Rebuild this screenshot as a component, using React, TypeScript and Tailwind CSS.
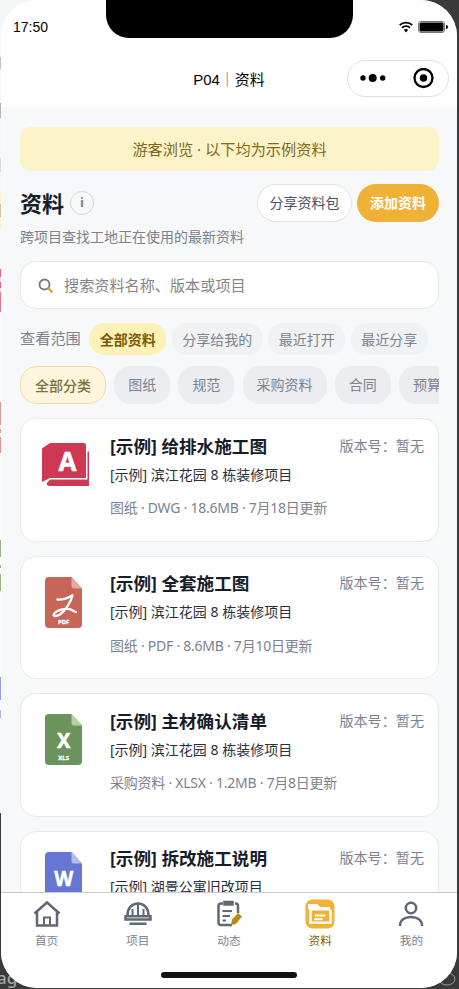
import React, { useState } from 'react';
import clsx from 'clsx';

type FileKind = 'dwg' | 'pdf' | 'xls' | 'doc';

interface Material {
  kind: FileKind;
  title: string;
  project: string;
  meta: string;
}

const materials: Material[] = [
  { kind: 'dwg', title: '[示例] 给排水施工图', project: '[示例] 滨江花园 8 栋装修项目', meta: '图纸 · DWG · 18.6MB · 7月18日更新' },
  { kind: 'pdf', title: '[示例] 全套施工图', project: '[示例] 滨江花园 8 栋装修项目', meta: '图纸 · PDF · 8.6MB · 7月10日更新' },
  { kind: 'xls', title: '[示例] 主材确认清单', project: '[示例] 滨江花园 8 栋装修项目', meta: '采购资料 · XLSX · 1.2MB · 7月8日更新' },
  { kind: 'doc', title: '[示例] 拆改施工说明', project: '[示例] 湖景公寓旧改项目', meta: '' },
];

const scopes = ['全部资料', '分享给我的', '最近打开', '最近分享'];
const categories = ['全部分类', '图纸', '规范', '采购资料', '合同', '预算'];

// colours of the page behind the phone, seen along its left edge
const edge = [
  ['h-[57px]', 'bg-[#f5f6f8]'],
  ['h-[12px]', 'bg-[#bfc0ca]'],
  ['h-[34px]', 'bg-[#f5f6f8]'],
  ['h-[15px]', 'bg-[#b4b4b8]'],
  ['h-[40px]', 'bg-[#f5f6f8]'],
  ['h-[14px]', 'bg-[#d9dade]'],
  ['h-[20px]', 'bg-[#f5f6f8]'],
  ['h-[12px]', 'bg-[#fbf1cf]'],
  ['h-[13px]', 'bg-[#cfc5a4]'],
  ['h-[12px]', 'bg-[#fbf1cf]'],
  ['h-[40px]', 'bg-[#f8f9fb]'],
  ['h-[8px]', 'bg-[#e0647a]'],
  ['h-[5px]', 'bg-[#f8e4e8]'],
  ['h-[6px]', 'bg-[#e0647a]'],
  ['h-[4px]', 'bg-[#f8e4e8]'],
  ['h-[20px]', 'bg-[#e0758a]'],
  ['h-[90px]', 'bg-[#fcfcfd]'],
  ['h-[23px]', 'bg-[#e0968e]'],
  ['h-[4px]', 'bg-white'],
  ['h-[4px]', 'bg-[#e0968e]'],
  ['h-[4px]', 'bg-white'],
  ['h-[16px]', 'bg-[#e0968e]'],
  ['h-[87px]', 'bg-[#fcfcfd]'],
  ['h-[17px]', 'bg-[#94b585]'],
  ['h-[8px]', 'bg-white'],
  ['h-[3px]', 'bg-[#94b585]'],
  ['h-[6px]', 'bg-white'],
  ['h-[17px]', 'bg-[#94b585]'],
  ['h-[86px]', 'bg-[#fcfcfd]'],
  ['h-[23px]', 'bg-[#919ee0]'],
  ['h-[10px]', 'bg-white'],
  ['h-[8px]', 'bg-[#a9b2e8]'],
  ['h-[95px]', 'bg-[#f8f9fb]'],
];

const FileIcon = ({ kind }: { kind: FileKind }) => {
  if (kind === 'dwg') {
    return (
      <svg width="48" height="44" viewBox="0 0 48 44">
        <path d="M8 0H41.5Q44 0 44 2.500V35H8L0 39V5.500Z" fill="#cd3852" />
        <path d="M45.500 8.500H47V43H7Q4.500 42 4.500 40.500L8 36.500H45.500Z" fill="#cd3852" />
        <text
          x="25.500" y="27.500" textAnchor="middle" fontSize="27" fontWeight="700" textLength="18" lengthAdjust="spacingAndGlyphs"
          fill="#fff" stroke="#fff" strokeWidth="0.500" className="font-['Noto_Sans']"
        >
          A
        </text>
      </svg>
    );
  }
  const body = { pdf: '#c76558', xls: '#6b945c', doc: '#6577d2' }[kind];
  const fold = { pdf: '#e5aaa2', xls: '#b4cfa7', doc: '#b2bdf0' }[kind];
  return (
    <svg width="37" height="51" viewBox="0 0 37 51">
      <path d="M4 0H26.500L37 11.500V47Q37 51 33 51H4Q0 51 0 47V4Q0 0 4 0Z" fill={body} />
      <path d="M26.500 0L37 11.500H29Q26.500 11.500 26.500 9Z" fill={fold} />
      {kind === 'pdf' ? (
        <>
          <path
            d="M12.500 22.500C18 23 23 21 27.500 18.200C26 25 20 34 15 37.500C11 40 7.500 39.500 9 37C11 33.500 19 31 24.500 32.200C28 33 29 34.800 31 35.200"
            fill="none" stroke="#fff" strokeWidth="2.300" strokeLinecap="round" strokeLinejoin="round"
          />
          <text x="18.700" y="46.500" textAnchor="middle" fontSize="6" fontWeight="700" fill="#fff" stroke="#fff" strokeWidth="0.300" className="font-['Noto_Sans']">PDF</text>
        </>
      ) : (
        <>
          <text
            x="18.700" y="34.300" textAnchor="middle" fontSize={kind === 'xls' ? 22 : 21} fontWeight="700"
            textLength={kind === 'xls' ? 13.5 : 19} lengthAdjust="spacingAndGlyphs"
            fill="#fff" stroke="#fff" strokeWidth="0.500" className="font-['Noto_Sans']"
          >
            {kind === 'xls' ? 'X' : 'W'}
          </text>
          <text x="18.700" y="46" textAnchor="middle" fontSize="6" fontWeight="700" fill="#fff" stroke="#fff" strokeWidth="0.300" className="font-['Noto_Sans']">
            {kind === 'xls' ? 'XLS' : 'DOC'}
          </text>
        </>
      )}
    </svg>
  );
};

const MaterialCard = ({ item }: { item: Material }) => (
  <div className="flex h-[123.500px] shrink-0 rounded-[16px] border border-[#e7e9ee] bg-white pl-[21px] pr-[14px]">
    <div className={clsx('w-[68px] shrink-0', item.kind === 'dwg' ? 'pt-[23.500px]' : 'pl-[3px] pt-[20px]')}>
      <FileIcon kind={item.kind} />
    </div>
    <div className="min-w-0 flex-1 pt-[13.500px]">
      <div className="flex items-center justify-between whitespace-nowrap">
        <h2 className="text-[17.600px] font-bold leading-[26px] text-[#171c2b]">{item.title}</h2>
        <span className="text-[14.100px] leading-[26px] text-[#7c8290]">版本号：暂无</span>
      </div>
      <p className="mt-[5px] text-[14px] leading-[22px] text-[#2b3040]">{item.project}</p>
      <p className="mt-[11.500px] whitespace-nowrap text-[14px] leading-[22px] tracking-[-0.250px] text-[#7c8290]">{item.meta}</p>
    </div>
  </div>
);

const tabs = [
  {
    label: '首页',
    icon: (
      <g>
        <path d="M2.500 14.500L15 3.500L27.500 14.500M5 12.500V26.500H25V12.500" />
        <path d="M12 26.500V18.500H18V26.500" strokeWidth="2" />
      </g>
    ),
  },
  {
    label: '项目',
    icon: (
      <g>
        <path d="M4.500 17V16C4.500 9 9 4.500 15 4.500S25.500 9 25.500 16V17M2.500 17.200H27.500V20.500H2.500ZM6.500 24.800H23.500" />
        <path d="M15 5V16.500M9.500 10V16.500M20.500 10V16.500" strokeWidth="2" />
      </g>
    ),
  },
  {
    label: '动态',
    icon: (
      <g>
        <path d="M9 4.500H7Q4.500 4.500 4.500 7V23.500Q4.500 26 7 26H18M21 4.500H21.500Q24 4.500 24 7V14" />
        <path d="M10.500 3H18.500V5.500H10.500Z" fill="#606775" />
        <path d="M8.500 12H18M8.500 17H16M8.500 21.500H12" strokeWidth="2" />
        <path d="M17 26L18 20.500L24 14L28 17.500L22 25Z" fill="#b78b16" stroke="none" />
      </g>
    ),
  },
  {
    label: '资料',
    icon: (
      <g>
        <rect x="0.500" y="0.500" width="29" height="29" rx="7" fill="#efb236" stroke="none" />
        <path d="M3 5H12.500L15 8H25V11.500H5V10H3Z" fill="#fff" stroke="none" />
        <path d="M5.500 10V23.800H25.500V10.500" stroke="#fff" />
        <path d="M10 16.500H20.500M9 20.300H17.500" stroke="#fff" strokeWidth="2" />
      </g>
    ),
  },
  {
    label: '我的',
    icon: (
      <g>
        <circle cx="15" cy="9" r="5.200" />
        <path d="M4 27C4 21 8.500 18 15 18S26 21 26 27" />
      </g>
    ),
  },
];

const StatusBar = () => (
  <header className="relative h-[106.500px] shrink-0 bg-white font-['Liberation_Sans','Noto_Sans_CJK_SC',sans-serif] text-black">
    <div className="absolute left-[105px] top-0 h-[38px] w-[247px] rounded-b-[23px] bg-black" />
    <div className="flex h-[54px] items-center justify-between pl-3 pr-2">
      <span className="text-[14px]">17:50</span>
      <div className="flex items-center gap-[5px]">
        <svg width="14" height="12" viewBox="0 0 14 12" fill="none" stroke="#000" strokeWidth="1.700">
          <path d="M0.700 4.200C4 0.700 10 0.700 13.300 4.200M3 6.800C5.200 4.500 8.800 4.500 11 6.800" />
          <path d="M4.800 8.800Q7 7 9.200 8.800L7 11.500Z" fill="#000" stroke="none" />
        </svg>
        <svg width="31" height="12" viewBox="0 0 31 12">
          <rect x="0.500" y="0.500" width="26" height="11" rx="2.500" fill="#fff" stroke="#777" />
          <rect x="1.500" y="1.500" width="24" height="9" rx="1.500" fill="#000" />
          <path d="M28 4Q30 4 30 6T28 8Z" fill="#000" />
        </svg>
      </div>
    </div>
    <div className="flex h-[48px] items-center justify-between pl-[110px] pr-2">
      <h1 className="flex-1 pt-[2px] text-center text-[15px] leading-none">
        P04<span className="font-bold text-[#a8692a]">｜</span>资料
      </h1>
      <div className="flex h-[37px] w-[102px] items-center justify-between rounded-full border border-[#dfdfdf] pl-[12px] pr-[14px]">
        <svg width="26" height="10" viewBox="0 0 26 10">
          <circle cx="3" cy="5" r="2.700" />
          <circle cx="12.700" cy="5" r="4" />
          <circle cx="22.700" cy="5" r="2.700" />
        </svg>
        <svg width="21" height="21" viewBox="0 0 21 21">
          <circle cx="10.500" cy="10" r="9" fill="none" stroke="#000" strokeWidth="2.300" />
          <circle cx="10.500" cy="10" r="3.700" />
        </svg>
      </div>
    </div>
  </header>
);

export default function App() {
  const [scope, setScope] = useState('全部资料');
  const [category, setCategory] = useState('全部分类');
  const [tab, setTab] = useState('资料');

  return (
    <div className="relative flex h-[989px] w-[459px] overflow-hidden bg-[#3a3a3a] font-['Noto_Sans','Noto_Sans_CJK_SC',sans-serif]">
      <div className="absolute left-0 top-0 flex w-[40px] flex-col">
        {edge.map(([height, color], i) => (
          <div key={i} className={clsx('shrink-0', height, color)} />
        ))}
      </div>
      <span className="absolute -left-[3px] bottom-0 text-[17px] font-medium leading-[22px] text-[#a5a5a5]">ag</span>
      <svg className="absolute bottom-0 right-0" width="24" height="22" viewBox="0 0 24 22" fill="none" stroke="#999">
        <ellipse cx="12" cy="12" rx="8" ry="6" />
      </svg>

      <div className="relative ml-px flex h-[988px] w-[456px] flex-col overflow-hidden rounded-[36px] bg-[#f7f8fa]">
        <StatusBar />

        <main className="flex min-h-0 flex-1 flex-col overflow-hidden pl-[19px] pr-[18px] pt-[20.500px]">
          <div className="flex h-[44px] shrink-0 items-center justify-center rounded-[11px] bg-[#fcf3c9] pt-px text-[15.200px] text-[#80681c]">
            游客浏览 · 以下均为示例资料
          </div>

          <div className="mt-[12.500px] flex h-[38px] shrink-0 items-center">
            <h2 className="text-[22px] font-bold leading-none text-[#171c2b]">资料</h2>
            <span className="ml-[6px] flex h-6 w-6 items-center justify-center rounded-full border border-[#d3d6dc] text-[13px] font-bold text-[#7c8290]">i</span>
            <button className="ml-auto h-[38px] w-[95px] rounded-full border border-[#e1e3e9] bg-white text-[14px] text-[#4b5162]">分享资料包</button>
            <button className="ml-[5px] h-[38px] w-[82px] rounded-full bg-[#efb236] text-[14px] font-bold text-white">添加资料</button>
          </div>
          <p className="mt-[4px] text-[14px] leading-[22px] text-[#7c8290]">跨项目查找工地正在使用的最新资料</p>

          <div className="mt-[13px] flex h-[48px] shrink-0 items-center rounded-[16px] border border-[#e7e9ee] bg-white pl-[17px]">
            <svg width="16" height="16" viewBox="0 0 16 16" fill="none" strokeWidth="1.900">
              <circle cx="6.500" cy="7.500" r="5" stroke="#737b8b" />
              <path d="M10 11L14.500 15.500" stroke="#d09d25" />
            </svg>
            <input
              placeholder="搜索资料名称、版本或项目"
              className="ml-[10px] flex-1 bg-transparent pt-px text-[15.150px] outline-none placeholder:text-[#858585]"
            />
          </div>

          <div className="mt-[14px] flex h-[32px] shrink-0 items-center gap-[5.500px] whitespace-nowrap text-[14px]">
            <span className="mr-[3px] text-[15.200px] text-[#7c8290]">查看范围</span>
            {scopes.map((s) => (
              <button
                key={s}
                onClick={() => setScope(s)}
                className={clsx(
                  'h-[32px] shrink-0 rounded-[15px] px-[10.500px] pt-px',
                  scope === s ? 'bg-[#fcf1b9] font-bold text-[#785a08]' : 'bg-[#f1f2f4] text-[#7c8290]'
                )}
              >
                {s}
              </button>
            ))}
          </div>

          <div className="mt-[11px] flex h-[39px] shrink-0 gap-[8.200px] overflow-hidden whitespace-nowrap text-[14px]">
            {categories.map((c) => (
              <button
                key={c}
                onClick={() => setCategory(c)}
                className={clsx(
                  'h-[38.500px] shrink-0 rounded-[17px]',
                  category === c
                    ? 'border border-[#f3dda1] bg-[#fdf5dd] px-[14px] pt-px font-medium text-[#7f703b]'
                    : 'bg-[#ebedf1] px-[14px] text-[#7c8290]'
                )}
              >
                {c}
              </button>
            ))}
          </div>

          <div className="mt-[13.500px] flex flex-col gap-[14px]">
            {materials.map((m) => (
              <MaterialCard key={m.title} item={m} />
            ))}
          </div>
        </main>

        <nav className="flex h-[96px] shrink-0 flex-col border-t border-[#c9cbd0] bg-white">
          <div className="flex">
            {tabs.map((t) => (
              <button key={t.label} onClick={() => setTab(t.label)} className="flex flex-1 flex-col items-center pt-[6px]">
                <svg width="30" height="30" viewBox="0 0 30 30" fill="none" stroke="#606775" strokeWidth="2.500">
                  {t.icon}
                </svg>
                <span className={clsx('mt-[2px] text-[11.700px] leading-[18px]', tab === t.label ? 'text-[#80600f]' : 'text-[#7c8290]')}>
                  {t.label}
                </span>
              </button>
            ))}
          </div>
          <div className="mb-[10px] ml-[160px] mt-auto h-[6px] w-[136px] rounded-full bg-[#111]" />
        </nav>
      </div>
    </div>
  );
}
